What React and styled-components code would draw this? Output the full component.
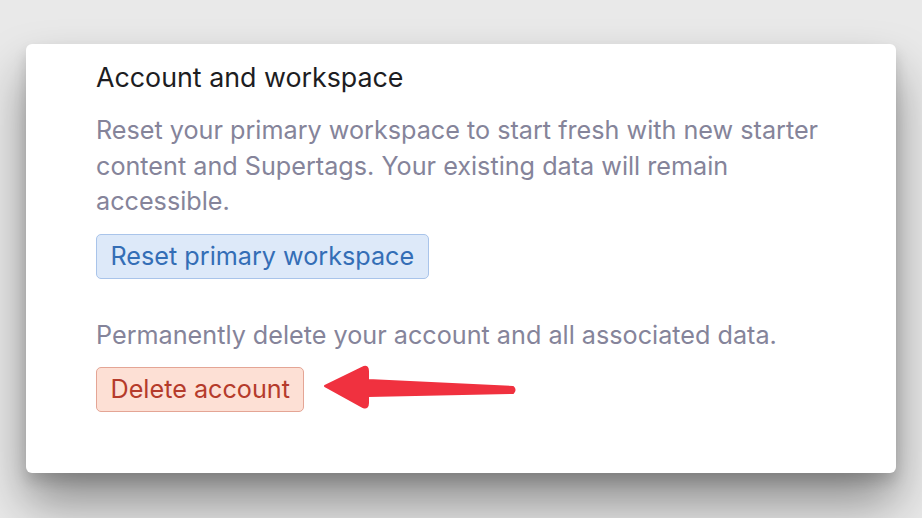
import { createGlobalStyle, styled } from "styled-components";

const GlobalStyle = createGlobalStyle`
  html, body {
    margin: 0;
    padding: 0;
    background: #e9e9e9;
    font-family: Inter, "Noto Sans", sans-serif;
  }
`;

const Page = styled.div`
  position: relative;
  width: 922px;
  height: 518px;
  padding: 44px 26px 0;
  box-sizing: border-box;
  overflow: hidden;
`;

const Card = styled.section`
  width: 870px;
  height: 429px;
  box-sizing: border-box;
  padding: 14px 70px 0;
  background: #ffffff;
  border-radius: 6px;
  box-shadow: 0 30px 50px rgba(0, 0, 0, 0.4), 0 8px 14px rgba(0, 0, 0, 0.14);
`;

const Title = styled.h2`
  margin: 0 0 17px;
  font-size: 26.8px;
  font-weight: 400;
  line-height: 38px;
  color: #1d1d22;
`;

const Text = styled.p`
  margin: 0 0 14px;
  font-size: 25.2px;
  line-height: 35.6px;
  color: #85849a;
`;

const ActionButton = styled.button`
  display: block;
  margin: 0 0 ${(p) => p.$gap || 0}px;
  padding: 0 13.5px;
  height: 45px;
  border-radius: 5px;
  font-family: inherit;
  font-size: 25.2px;
  line-height: 43px;
  cursor: pointer;
  color: ${(p) => (p.$danger ? "#b53b2b" : "#346eb6")};
  background: ${(p) => (p.$danger ? "#fde0d5" : "#dde9f9")};
  border: 1px solid ${(p) => (p.$danger ? "#e4a595" : "#a9c4ea")};
`;

const Arrow = styled.svg`
  position: absolute;
  left: 0;
  top: 0;
  pointer-events: none;
`;

export default function App() {
  return (
    <>
      <GlobalStyle />
      <Page>
        <Card>
          <Title>Account and workspace</Title>
          <Text>
            Reset your primary workspace to start fresh with new starter
            content and Supertags. Your existing data will remain accessible.
          </Text>
          <ActionButton $gap={39}>Reset primary workspace</ActionButton>
          <Text>Permanently delete your account and all associated data.</Text>
          <ActionButton $danger>Delete account</ActionButton>
        </Card>
        <Arrow width="922" height="518" viewBox="0 0 922 518">
          <path
            d="M325 386 L364 367 Q368 366 368 371 L368 380 L513 387 Q516 390 513 393 L368 396 L368 403 Q368 409 363 407 Z"
            fill="#f0313f"
            stroke="#f0313f"
            strokeWidth="2"
            strokeLinejoin="round"
          />
        </Arrow>
      </Page>
    </>
  );
}
